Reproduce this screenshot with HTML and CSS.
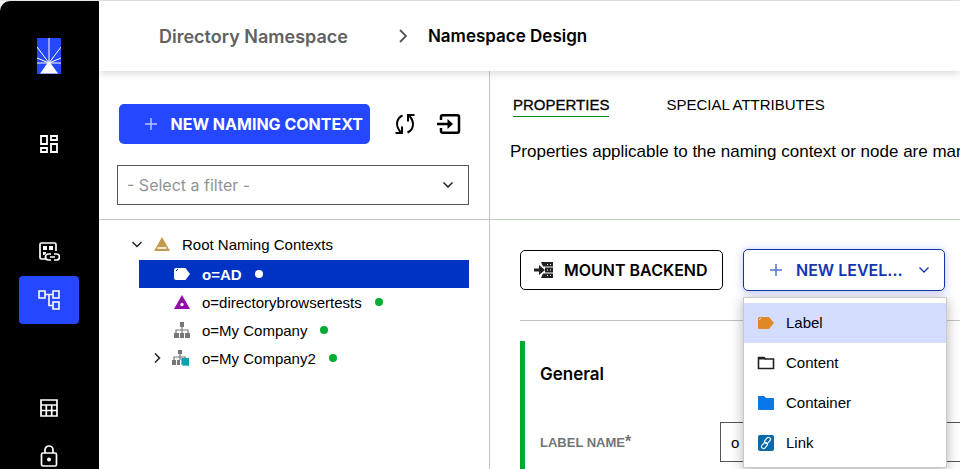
FILE: index.html
```html
<!DOCTYPE html>
<html lang="en">
<head>
<meta charset="utf-8">
<title>Namespace Design</title>
<link rel="stylesheet" href="styles.css">
</head>
<body>
<div class="app">
  <nav class="sidebar" aria-label="Main">
    <a class="logo" href="#" aria-label="Home">
      <svg width="24" height="36" viewBox="0 0 24 36"><path fill="#2447ff" d="M0 0h24v36H0z"/><path d="M12 0v25M0 9l12 16L24 9M0 20l12 5 12-5M0 25h24" fill="none" stroke="#fff" stroke-width="1"/><path d="M12 23l9 12.500H3z" fill="#fff"/></svg>
    </a>
    <a class="nav-item" href="#" aria-label="Dashboard">
      <svg width="18" height="18" viewBox="0 0 18 18" fill="none" stroke="#fff" stroke-width="1.800"><path d="M1 1h6v8H1zM11 1h6v4h-6zM1 13h6v4H1zM11 9h6v8h-6z"/></svg>
    </a>
    <a class="nav-item group-start" href="#" aria-label="Data sources">
      <svg width="22" height="20" viewBox="0 0 22 20" fill="none" stroke="#fff" stroke-width="1.700"><path d="M8 17H3.500Q2 17 2 15.500V2.500Q2 1 3.500 1h13Q18 1 18 2.500V9M13 12h-2.500a3 3 0 0 0 0 6H13M16 12h2.500a3 3 0 0 1 0 6H16M12 15h5"/><path fill="#fff" stroke="none" d="M5 4h4v4H5zM11 4h4v4h-4zM5 10h3v1.500L6 13H5z"/></svg>
    </a>
    <a class="nav-item current" href="#" aria-label="Directory namespace" aria-current="page">
      <svg width="22" height="20" viewBox="0 0 22 20" fill="none" stroke="#fff" stroke-width="1.600"><path d="M1 1h6v7H1zM15 1h6v7h-6zM15 12h6v7h-6zM7 4.500h8M11 4.500v11h4"/></svg>
    </a>
    <a class="nav-item group-start" href="#" aria-label="Reports">
      <svg width="18" height="18" viewBox="0 0 18 18" fill="none" stroke="#fff" stroke-width="1.700"><path d="M1 1h16v16H1zM1 6h16M1 11.500h16M6.300 6v11M11.700 6v11"/></svg>
    </a>
    <a class="nav-item" href="#" aria-label="Security">
      <svg width="18" height="22" viewBox="0 0 18 22" fill="none" stroke="#fff" stroke-width="1.700"><rect x="1.500" y="8" width="15" height="13" rx="1.500"/><path d="M5 8V5a4 4 0 0 1 8 0v3"/><circle cx="9" cy="14.500" r="2" fill="#fff" stroke="none"/></svg>
    </a>
  </nav>

  <div class="page">
    <header class="header">
      <a class="crumb" href="#">Directory Namespace</a>
      <svg class="crumb-sep" width="10" height="16" viewBox="0 0 10 16"><path d="M2 2l6 6-6 6" fill="none" stroke="#555" stroke-width="1.800"/></svg>
      <h1 class="crumb-current">Namespace Design</h1>
    </header>

    <div class="panes">
      <section class="tree-pane">
        <div class="pane-top">
          <div class="toolbar">
            <button class="btn btn-primary" type="button">
              <svg width="12" height="12" viewBox="0 0 12 12"><path d="M6 0v12M0 6h12" stroke="#b9c4ff" stroke-width="1.500"/></svg>
              NEW NAMING CONTEXT
            </button>
            <div class="toolbar-icons">
              <button class="icon-btn" type="button" aria-label="Refresh">
                <svg width="22" height="22" viewBox="0 0 22 22" fill="none" stroke="#000" stroke-width="2"><path d="M8.500 2.500C3 5 .500 12 6.500 19M8 13.500V20H1.500M13.500 19.500C19 17 21.500 10 15.500 3M14 8.500V2h6.500"/></svg>
              </button>
              <button class="icon-btn" type="button" aria-label="Import">
                <svg width="24" height="20" viewBox="0 0 24 20" fill="none" stroke="#000" stroke-width="2.500"><path d="M4 6V2.700Q4 1.300 5.500 1.300h15q1.500 0 1.500 1.500v14.500q0 1.500-1.500 1.500h-15Q4 18.700 4 17.300V14M0 10h13"/><path fill="#000" stroke="none" d="M10.500 5l5.500 5-5.500 5z"/></svg>
              </button>
            </div>
          </div>
          <div class="filter">
            <select class="filter-select" aria-label="Filter"><option>- Select a filter -</option></select>
            <svg class="filter-caret" width="10" height="6" viewBox="0 0 10 6"><path d="M.5.5L5 5 9.500.5" fill="none" stroke="#222" stroke-width="1.500"/></svg>
          </div>
        </div>

        <ul class="tree">
          <li>
            <div class="node">
              <svg class="twisty" width="10" height="10" viewBox="0 0 10 10"><path d="M.5 3L5 7.500 9.500 3" fill="none" stroke="#222" stroke-width="1.500"/></svg>
              <svg width="16" height="16" viewBox="0 0 16 16"><path d="M8 1l8 14H0z" fill="#c39b4f"/><path d="M3.500 12h9" stroke="#fff" stroke-width="1.500"/></svg>
              <span>Root Naming Contexts</span>
            </div>
            <ul class="branch">
              <li class="node selected">
                <span class="twisty"></span>
                <svg width="16" height="16" viewBox="0 0 16 16"><path d="M2 2h9.500L16 8l-4.500 6H2Q0 14 0 12V4q0-2 2-2z" fill="#fff"/><path d="M2 5l2-2" stroke="#0032c4"/></svg>
                <span>o=AD</span><i class="dot"></i>
              </li>
              <li class="node">
                <span class="twisty"></span>
                <svg width="16" height="16" viewBox="0 0 16 16"><path d="M8 1l8 14H0z" fill="#920aa8"/><circle cx="8" cy="10.500" r="1.700" fill="#fff"/></svg>
                <span>o=directorybrowsertests</span><i class="dot"></i>
              </li>
              <li class="node">
                <span class="twisty"></span>
                <svg width="16" height="16" viewBox="0 0 16 16"><path fill="#777" d="M6 0h4v5H6zM0 11h5v5H0zM6 11h4v5H6zM11 11h5v5h-5z"/><path d="M2 11V8h12v3M8 5v6" fill="none" stroke="#777" stroke-width="1.200"/></svg>
                <span>o=My Company</span><i class="dot"></i>
              </li>
              <li class="node">
                <svg class="twisty" width="10" height="10" viewBox="0 0 10 10"><path d="M3 .5L7.500 5 3 9.500" fill="none" stroke="#222" stroke-width="1.500"/></svg>
                <svg class="cluster" width="18" height="16" viewBox="0 0 18 16"><path fill="#777" d="M6 0h4v4H6zM0 10h4v5H0zM5 10h3v5H5z"/><path d="M2 10V7h11v2M8 4v6" fill="none" stroke="#777" stroke-width="1.200"/><path fill="#0aa0ad" d="M10 8h7v8h-6l-2-2V9z"/><path d="M9.500 9v4.500l2 2H16" fill="none" stroke="#7fd3d8" stroke-width=".7"/></svg>
                <span>o=My Company2</span><i class="dot"></i>
              </li>
            </ul>
          </li>
        </ul>
      </section>

      <main class="detail">
        <div class="detail-top">
          <div class="tabs" role="tablist">
            <button class="tab active" type="button" role="tab" aria-selected="true">PROPERTIES</button>
            <button class="tab" type="button" role="tab" aria-selected="false">SPECIAL ATTRIBUTES</button>
          </div>
          <p class="intro">Properties applicable to the naming context or node are managed here.</p>
        </div>

        <div class="detail-body">
          <div class="actions">
            <button class="btn btn-outline" type="button">
              <svg width="20" height="18" viewBox="0 0 20 18"><path fill="#222" d="M7 1h12v4.500H9zM11 6.500h8v5h-8zM9 12.500h10V17H7zM0 7.500h5V4l6 5-6 5v-3.500H0z"/><path fill="#fff" d="M13 3h1v1h-1zM16 3h1v1h-1zM13 8.500h1v1h-1zM16 8.500h1v1h-1zM13 14h1v1h-1zM16 14h1v1h-1z"/></svg>
              MOUNT BACKEND
            </button>
            <div class="dropdown">
              <button class="btn btn-level" type="button" aria-expanded="true">
                <svg width="12" height="12" viewBox="0 0 12 12"><path d="M6 0v12M0 6h12" stroke="#5671cf" stroke-width="1.500"/></svg>
                <span>NEW LEVEL...</span>
                <svg class="level-caret" width="10" height="6" viewBox="0 0 10 6"><path d="M.5.5L5 5 9.500.5" fill="none" stroke="#1236ae" stroke-width="1.300"/></svg>
              </button>
              <div class="menu" role="menu">
                <button class="menu-item highlighted" type="button" role="menuitem">
                  <svg width="18" height="18" viewBox="0 0 18 18"><path d="M2.500 3h9.500l5 6-5 6H2.500Q1 15 1 13.500v-9Q1 3 2.500 3z" fill="#df8a26"/><path d="M2 6l2-2" stroke="#f7d9ae"/></svg>
                  Label
                </button>
                <button class="menu-item" type="button" role="menuitem">
                  <svg width="18" height="18" viewBox="0 0 18 18"><path d="M1.500 14.500v-11H7l1.500 1.500h8v9.500z" fill="none" stroke="#222" stroke-width="1.600"/><path d="M1 3h6l2 2.500H1z" fill="#222"/></svg>
                  Content
                </button>
                <button class="menu-item" type="button" role="menuitem">
                  <svg width="18" height="18" viewBox="0 0 18 18"><path d="M2 2h5l2 2h7q1 0 1 1v10q0 1-1 1H2q-1 0-1-1V3q0-1 1-1z" fill="#0878e8"/></svg>
                  Container
                </button>
                <button class="menu-item" type="button" role="menuitem">
                  <svg width="18" height="18" viewBox="0 0 18 18"><rect x="1" y="1" width="16" height="16" rx="2" fill="#086ba8"/><g fill="none" stroke="#fff" stroke-width="1.100"><rect x="8.500" y="3" width="4" height="7" rx="2" transform="rotate(40 10.500 6.500)"/><rect x="5.500" y="8" width="4" height="7" rx="2" transform="rotate(40 7.500 11.500)"/></g></svg>
                  Link
                </button>
              </div>
            </div>
          </div>

          <section class="card">
            <h2 class="card-title">General</h2>
            <div class="field">
              <label class="field-label" for="label-name">LABEL NAME<span class="required">*</span></label>
              <input class="field-input" id="label-name" type="text" value="o">
            </div>
          </section>
        </div>
      </main>
    </div>
  </div>
</div>
</body>
</html>
```
FILE: styles.css
```css
* { box-sizing: border-box; }

body {
  margin: 0;
  overflow: hidden;
  background: #f2f2f2;
  color: #000;
  font-family: "Liberation Sans", Arial, sans-serif;
  font-size: 15px;
}

button, input, select { font: inherit; color: inherit; }
button { cursor: pointer; }
svg { flex: none; display: block; }
h1, h2, p, ul { margin: 0; padding: 0; font-weight: inherit; }
ul { list-style: none; }

.app {
  display: flex;
  height: 100vh;
  border-top: 1px solid #e6e6e6;
}

/* Sidebar */
.sidebar {
  flex: none;
  display: flex;
  flex-direction: column;
  align-items: center;
  width: 99px;
  padding: 37px 1px 0 0;
  overflow: hidden;
  background: #000;
  border-top-left-radius: 10px;
}
.logo { margin-bottom: 46px; }
.nav-item {
  flex: none;
  display: flex;
  align-items: center;
  justify-content: center;
  width: 60px;
  height: 48px;
  border-radius: 4px;
}
.group-start { margin-top: 60px; }
.current { background: #2447ff; }

/* Header */
.page {
  flex: 1;
  display: flex;
  flex-direction: column;
  min-width: 0;
  background: #fff;
}
.header {
  flex: none;
  display: flex;
  align-items: center;
  height: 70px;
  padding-left: 60px;
  background: #fff;
  box-shadow: 0 2px 8px rgba(0, 0, 0, 0.16);
  z-index: 1;
}
.crumb {
  color: #616161;
  font-family: Inter, sans-serif;
  font-size: 18px;
  font-weight: 600;
  text-decoration: none;
}
.crumb-sep { margin: 0 20px 0 50px; }
.crumb-current {
  font-family: Inter, sans-serif;
  font-size: 17px;
  font-weight: 600;
}

/* Panes */
.panes {
  flex: 1;
  display: flex;
  min-height: 0;
}
.tree-pane {
  flex: none;
  width: 391px;
  border-right: 1px solid #c4c4c4;
}
.pane-top {
  height: 149px;
  padding: 33px 20px 0 18px;
  border-bottom: 1px solid #c4c4c4;
}
.toolbar {
  display: flex;
  align-items: center;
  gap: 24px;
  padding: 0 8px 0 2px;
}
.toolbar-icons {
  display: flex;
  align-items: center;
  gap: 21px;
}
.btn {
  display: flex;
  align-items: center;
  height: 40px;
  border-radius: 5px;
  font-family: Inter, sans-serif;
  font-size: 16px;
  font-weight: 600;
  white-space: nowrap;
}
.btn-primary {
  flex: 1;
  justify-content: flex-end;
  gap: 14px;
  padding: 0 7px;
  border: 0;
  background: #2447ff;
  color: #fff;
  font-weight: 700;
}
.icon-btn {
  display: flex;
  padding: 0;
  border: 0;
  background: none;
}
.filter {
  display: grid;
  align-items: center;
  margin-top: 21px;
}
.filter-select {
  grid-area: 1 / 1;
  width: 100%;
  height: 40px;
  padding: 0 9px;
  border: 1px solid #555;
  border-radius: 0;
  background: #fff;
  color: #949494;
  font-family: Inter, sans-serif;
  font-size: 16px;
  appearance: none;
}
.filter-caret {
  grid-area: 1 / 1;
  justify-self: end;
  margin-right: 16px;
  pointer-events: none;
}

/* Tree */
.tree { padding: 10px 20px 0; }
.branch {
  margin-left: 20px;
  padding-top: 2px;
}
.node {
  display: flex;
  align-items: center;
  height: 28px;
  padding-left: 13px;
  white-space: nowrap;
}
.twisty {
  flex: none;
  width: 10px;
  margin-right: 12px;
}
.node > svg:nth-child(2) { margin-right: 12px; }
.node > .cluster:nth-child(2) { margin: 0 12px 0 -2px; }
.selected {
  background: #0032c4;
  color: #fff;
  font-weight: 700;
}
.dot {
  width: 8px;
  height: 8px;
  margin-left: 13px;
  border-radius: 50%;
  background: #00ac2f;
}
.selected .dot { background: #fff; }

/* Detail */
.detail {
  flex: 1;
  min-width: 0;
  overflow: hidden;
}
.detail-top {
  height: 149px;
  padding: 25px 0 0 20px;
  border-bottom: 1px solid #b9d8bb;
}
.tabs {
  display: flex;
  gap: 57px;
  padding-left: 3px;
}
.tab {
  padding: 0 0 2px;
  border: 0;
  border-bottom: 1px solid transparent;
  background: none;
  line-height: 18px;
}
.active {
  border-color: #008a19;
  -webkit-text-stroke: 0.3px #000;
}
.intro {
  margin-top: 25px;
  font-size: 17px;
  line-height: 20px;
  white-space: nowrap;
}
.detail-body { padding: 29px 0 0 30px; }
.actions {
  display: flex;
  align-items: center;
  gap: 20px;
  padding-bottom: 29px;
  border-bottom: 1px solid #c4c4c4;
}
.btn-outline {
  gap: 10px;
  width: 203px;
  padding: 0 13px;
  border: 1px solid #000;
  background: #fff;
}
.dropdown { position: relative; }
.btn-level {
  width: 202px;
  height: 42px;
  padding: 0 15px 0 26px;
  border: 1px solid #1236ae;
  background: #fff;
  box-shadow: 0 1px 8px rgba(36, 71, 255, 0.3);
  color: #1236ae;
  gap: 14px;
}
.level-caret { margin-left: auto; }
.menu {
  position: absolute;
  top: 100%;
  left: 0;
  width: 204px;
  margin-top: 6px;
  padding: 5px 0 4px;
  border: 1px solid #c9c9c9;
  background: #fff;
  box-shadow: 0 3px 12px rgba(0, 0, 0, 0.3);
  z-index: 2;
}
.menu-item {
  display: flex;
  align-items: center;
  gap: 11px;
  width: 100%;
  height: 40px;
  padding: 0 13px 1px;
  border: 0;
  background: none;
}
.highlighted { background: #d4dcff; }

.card {
  margin-top: 20px;
  padding: 22px 0 24px 15px;
  border-left: 5px solid #00ac2f;
}
.card-title {
  font-family: Inter, sans-serif;
  font-size: 17px;
  font-weight: 600;
  line-height: 22px;
}
.field {
  display: grid;
  grid-template-columns: 180px 1fr;
  align-items: center;
  margin-top: 37px;
}
.field-label {
  color: #757575;
  font-size: 13px;
  font-weight: 700;
}
.required { font-size: 16px; }
.field-input {
  min-width: 0;
  height: 40px;
  padding: 0 10px;
  border: 1px solid #555;
  border-right: 0;
}
```
